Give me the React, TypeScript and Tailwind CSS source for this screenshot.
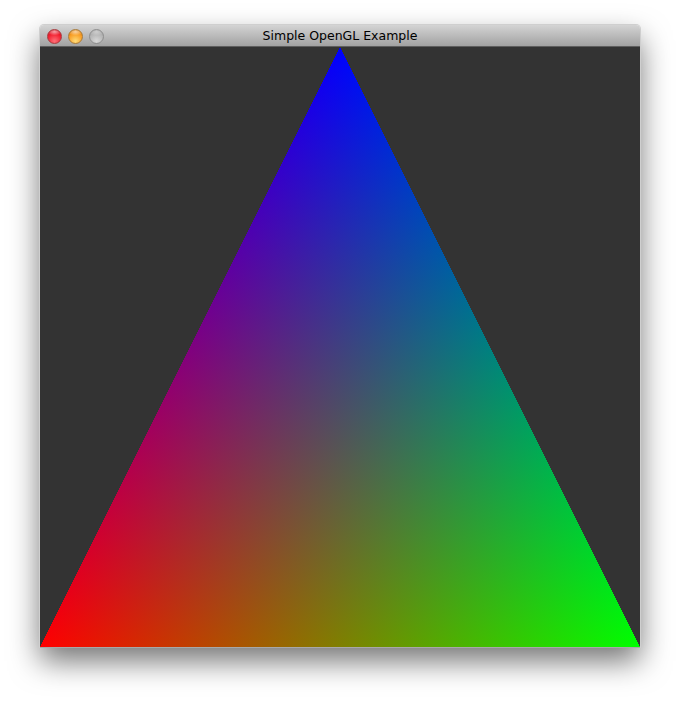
// Mac window with a single interpolated triangle
function Light({ className }: { className: string }) {
  return <div className={`h-[15px] w-[15px] rounded-full border ${className}`} />;
}

function Triangle() {
  const points = "300,0 0,600 600,600";
  return (
    <svg width="600" height="600" viewBox="0 0 600 600" className="block isolate" shapeRendering="crispEdges">
      <defs>
        <linearGradient id="red" gradientUnits="userSpaceOnUse" x1="0" y1="600" x2="480" y2="360">
          <stop offset="0" stopColor="#ff0000" />
          <stop offset="1" stopColor="#000000" />
        </linearGradient>
        <linearGradient id="green" gradientUnits="userSpaceOnUse" x1="600" y1="600" x2="120" y2="360">
          <stop offset="0" stopColor="#00ff00" />
          <stop offset="1" stopColor="#000000" />
        </linearGradient>
        <linearGradient id="blue" gradientUnits="userSpaceOnUse" x1="300" y1="0" x2="300" y2="600">
          <stop offset="0" stopColor="#0000ff" />
          <stop offset="1" stopColor="#000000" />
        </linearGradient>
      </defs>
      <polygon points={points} fill="url(#red)" />
      <polygon points={points} fill="url(#green)" className="mix-blend-screen" />
      <polygon points={points} fill="url(#blue)" className="mix-blend-screen" />
    </svg>
  );
}

export default function App() {
  return (
    <div className="h-[702px] w-[680px] overflow-hidden bg-white pl-[40px] pt-[25px]">
      <div className="h-[622px] w-[600px] rounded-t-[4px] shadow-[0_1px_0_0_#a8a8a8,0_0_0_1px_#cfcfcf,0_14px_30px_rgba(0,0,0,0.55)]">
        <div className="grid h-[22px] grid-cols-[1fr_auto_1fr] items-center rounded-t-[4px] border-b border-[#5e5e5e] bg-gradient-to-b from-[#d4d4d4] to-[#a2a2a2]">
          <div className="flex items-center gap-[6px] pl-[7px] pt-px">
            <Light className="border-[#a83a3e] bg-[radial-gradient(ellipse_55%_28%_at_50%_14%,rgba(255,255,255,0.6),transparent),radial-gradient(circle_at_50%_85%,#ff7078,#f01c2c_60%,#c41420)]" />
            <Light className="border-[#a87a38] bg-[radial-gradient(ellipse_55%_28%_at_50%_14%,rgba(255,255,255,0.6),transparent),radial-gradient(circle_at_50%_85%,#ffdc78,#f89a20_60%,#d07a10)]" />
            <Light className="border-[#8e8e8e] bg-[radial-gradient(ellipse_55%_28%_at_50%_14%,rgba(255,255,255,0.4),transparent),radial-gradient(circle_at_50%_85%,#d8d8d8,#b4b4b4_60%,#a0a0a0)]" />
          </div>
          <span className="pt-[2px] font-['DejaVu_Sans',sans-serif] text-[12.5px] leading-none text-black">Simple OpenGL Example</span>
          <div />
        </div>
        <div className="h-[600px] bg-[#333333]">
          <Triangle />
        </div>
      </div>
    </div>
  );
}
